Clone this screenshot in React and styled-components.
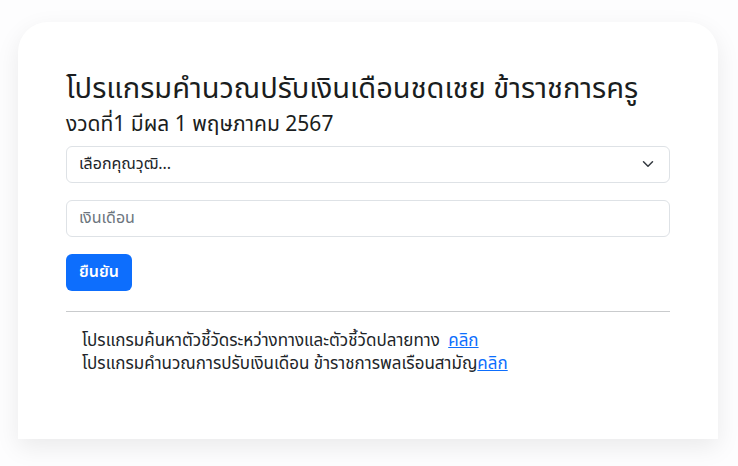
import React from "react";
import styled, { createGlobalStyle } from "styled-components";

const GlobalStyle = createGlobalStyle`
  body {
    margin: 0;
    background: #ffffff;
    font-family: "Noto Sans", "Noto Sans Thai", sans-serif;
    color: #212529;
  }
`;

const Page = styled.div`
  padding: 22px 20px 27px 18px;
  background: #fdfdfe;
`;

const Card = styled.section`
  width: 700px;
  box-sizing: border-box;
  background: #fff;
  border-radius: 30px 30px 0 0;
  box-shadow: 0 8px 24px rgba(0, 0, 0, 0.08);
  padding: 46px 48px 65px;
`;

const Title = styled.h1`
  font-size: 29px;
  font-weight: 400;
  line-height: 1.3;
  margin: 0 0 4px;
  color: #1a1d20;
`;

const Subtitle = styled.h2`
  font-size: 21px;
  font-weight: 400;
  line-height: 1.3;
  margin: 0 0 9px;
  color: #1a1d20;
`;

const Form = styled.form`
  display: flex;
  flex-direction: column;
  align-items: flex-start;
  gap: 17px;
`;

const Field = styled.div`
  position: relative;
  width: 100%;
  height: 37px;
  box-sizing: border-box;
  border: 1px solid #dee2e6;
  border-radius: 6px;
  display: flex;
  align-items: center;
  padding: 0 12px;
  font-size: 16px;
  color: ${(p) => (p.$placeholder ? "#6c757d" : "#212529")};
`;

const Chevron = styled.svg`
  position: absolute;
  right: 15px;
  top: 50%;
  transform: translateY(-50%);
`;

const Button = styled.button`
  background: #0d6efd;
  color: #fff;
  border: none;
  border-radius: 6px;
  height: 37px;
  padding: 0 13px;
  font-family: inherit;
  font-size: 16px;
  font-weight: 600;
`;

const Divider = styled.hr`
  border: none;
  border-top: 1px solid #c9cbcd;
  margin: 20px 0 16px;
`;

const Links = styled.div`
  padding-left: 16px;
  font-size: 17px;
  line-height: 23px;
`;

const Link = styled.a`
  color: #0d6efd;
  text-decoration: underline;
  margin-left: ${(p) => (p.$spaced ? "4px" : "0")};
`;

export default function App() {
  return (
    <>
      <GlobalStyle />
      <Page>
        <Card>
          <Title>โปรแกรมคำนวณปรับเงินเดือนชดเชย ข้าราชการครู</Title>
          <Subtitle>งวดที่1 มีผล 1 พฤษภาคม 2567</Subtitle>
          <Form>
            <Field>
              เลือกคุณวุฒิ...
              <Chevron width="12" height="12" viewBox="0 0 16 16" fill="none">
                <path d="M2 5l6 6 6-6" stroke="#343a40" strokeWidth="2" strokeLinecap="round" strokeLinejoin="round" />
              </Chevron>
            </Field>
            <Field $placeholder>เงินเดือน</Field>
            <Button type="button">ยืนยัน</Button>
          </Form>
          <Divider />
          <Links>
            <div>
              โปรแกรมค้นหาตัวชี้วัดระหว่างทางและตัวชี้วัดปลายทาง <Link $spaced href="#">คลิก</Link>
            </div>
            <div>
              โปรแกรมคำนวณการปรับเงินเดือน ข้าราชการพลเรือนสามัญ<Link href="#">คลิก</Link>
            </div>
          </Links>
        </Card>
      </Page>
    </>
  );
}
